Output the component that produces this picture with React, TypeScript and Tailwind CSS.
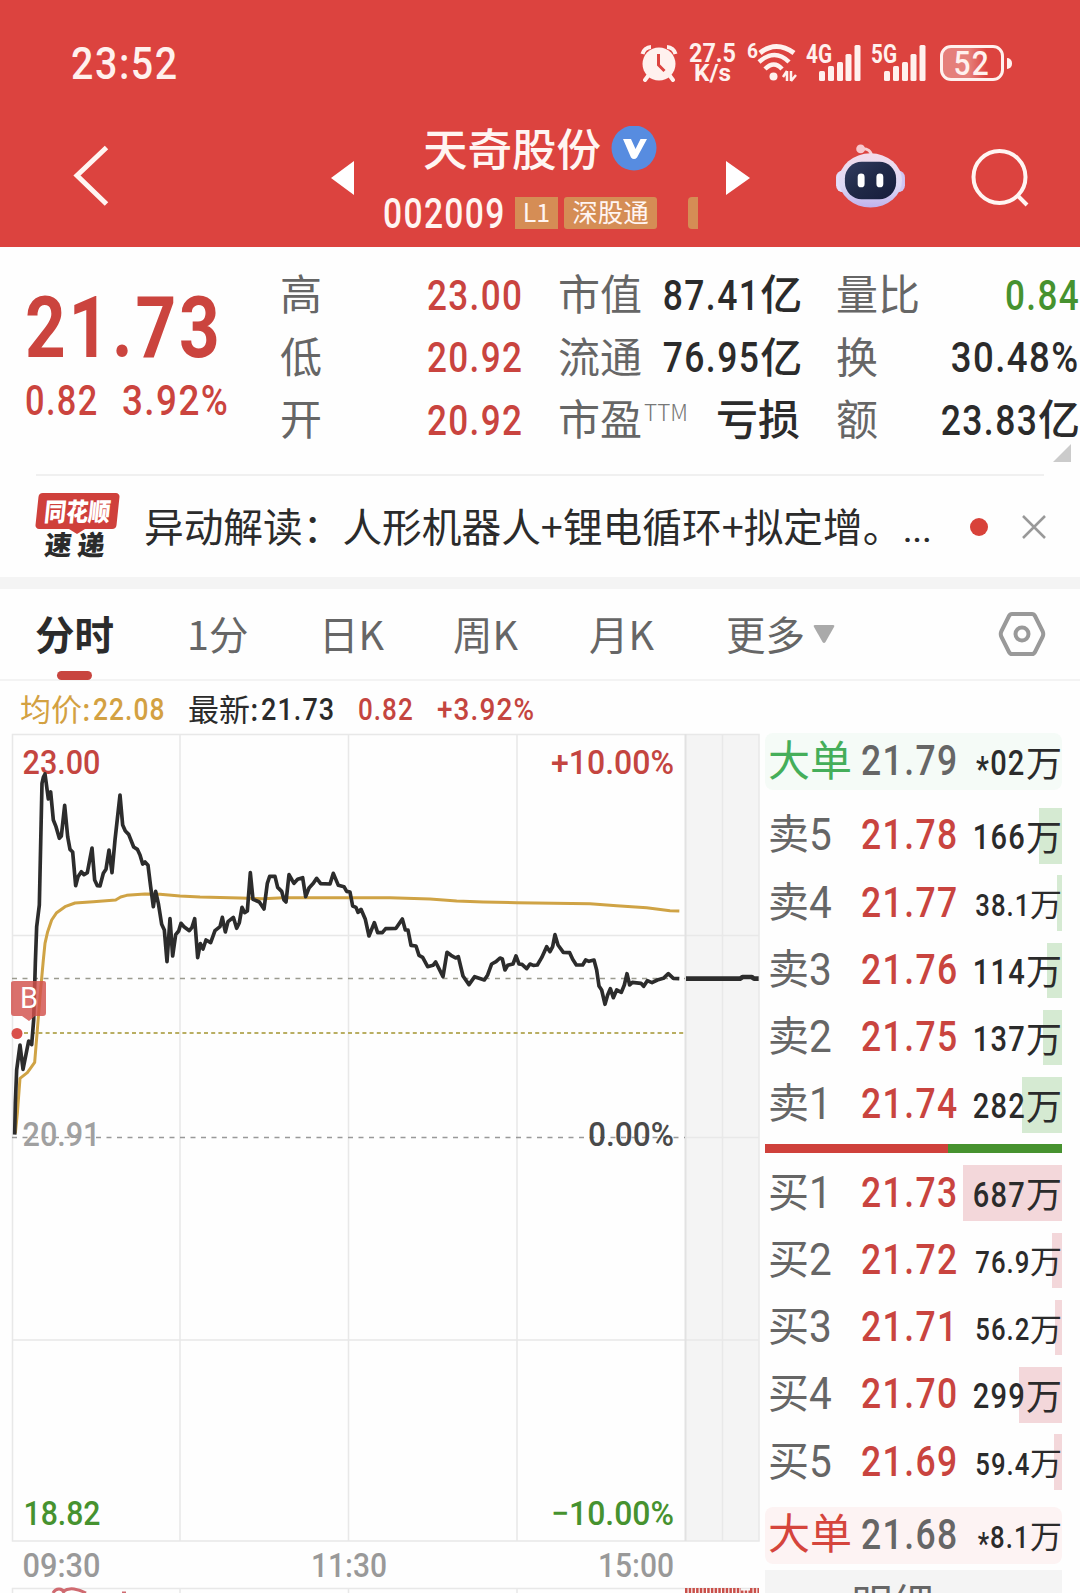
import type { ReactNode } from "react";
import clsx from "clsx";

type Level = { label: string; price: string; amount: string; bar: string; small?: boolean };

const asks: Level[] = [
  { label: "卖5", price: "21.78", amount: "166", bar: "w-[23px]" },
  { label: "卖4", price: "21.77", amount: "38.1", bar: "w-[5px]", small: true },
  { label: "卖3", price: "21.76", amount: "114", bar: "w-[15px]" },
  { label: "卖2", price: "21.75", amount: "137", bar: "w-[19px]" },
  { label: "卖1", price: "21.74", amount: "282", bar: "w-[40px]" },
];

const bids: Level[] = [
  { label: "买1", price: "21.73", amount: "687", bar: "w-[99px]" },
  { label: "买2", price: "21.72", amount: "76.9", bar: "w-[10px]", small: true },
  { label: "买3", price: "21.71", amount: "56.2", bar: "w-[7px]", small: true },
  { label: "买4", price: "21.70", amount: "299", bar: "w-[43px]" },
  { label: "买5", price: "21.69", amount: "59.4", bar: "w-[8px]", small: true },
];

// Series points, three units per pixel
const pricePoints =
  "44,1214 46,1120 50,1020 60,945 69,1018 86,933 95,944 101,870 106,700 110,590 118,525 126,160 130,142 135,132 145,207 152,186 160,270 168,290 178,325 184,318 194,226 203,320 210,358 218,366 227,467 234,440 244,425 252,434 262,428 276,354 284,450 292,467 300,468 310,430 318,418 327,360 336,428 345,330 360,195 368,285 376,303 386,313 401,351 412,358 420,375 428,402 435,396 444,406 452,470 460,530 467,484 475,520 485,583 493,600 501,695 510,566 518,678 527,614 536,603 543,580 552,590 568,602 576,592 584,566 593,683 601,641 609,657 618,630 632,638 645,602 660,590 667,562 676,606 684,575 700,562 710,595 718,578 726,532 734,548 742,543 751,428 759,508 778,516 792,537 802,460 809,439 825,439 833,472 845,484 852,510 858,516 867,434 876,450 882,460 893,448 908,443 917,500 927,474 940,460 950,445 962,461 990,462 1000,430 1015,466 1032,470 1040,484 1050,486 1058,528 1068,532 1074,547 1083,538 1096,568 1107,618 1123,578 1133,608 1147,608 1157,596 1188,595 1207,567 1216,600 1224,600 1233,646 1248,648 1257,676 1268,682 1283,710 1299,706 1307,696 1329,740 1341,667 1353,676 1367,684 1375,680 1389,738 1407,764 1424,740 1453,750 1463,735 1475,702 1488,695 1500,684 1507,687 1515,720 1523,706 1539,702 1548,678 1557,702 1566,703 1580,716 1590,702 1600,706 1612,705 1625,683 1640,650 1650,665 1658,650 1665,614 1674,645 1690,667 1709,668 1718,688 1729,705 1748,705 1757,690 1767,694 1782,690 1790,720 1797,768 1805,780 1815,823 1823,795 1831,776 1840,803 1850,780 1864,787 1873,765 1881,731 1889,765 1897,757 1923,760 1931,769 1942,752 1956,758 1972,750 1990,745 2005,731 2020,745 2038,746";

const averagePoints =
  "46,1210 52,1150 60,1045 82,1028 95,1010 104,997 112,900 120,800 130,690 135,640 143,605 155,570 170,548 195,530 225,519 280,515 347,510 362,501 380,496 435,492 480,493 540,498 600,501 720,504 790,506 850,503 1170,503 1290,507 1370,513 1450,516 1550,518 1770,521 1850,527 1940,533 2010,542 2038,543";

function Num({ children, className, scale = "scale-x-[0.815]" }: { children: ReactNode; className?: string; scale?: string }) {
  return (
    <span
      className={clsx(
        "inline-block whitespace-nowrap font-['Roboto','Liberation_Sans',sans-serif] leading-none tracking-[0.04em]",
        scale,
        className,
      )}
    >
      {children}
    </span>
  );
}

function Signal({ name }: { name: string }) {
  return (
    <svg width="56" height="40" viewBox="0 0 56 40" fill="#fff1ee" className="overflow-visible">
      <text x="0" y="19.5" textLength="26" lengthAdjust="spacingAndGlyphs" className="font-['Roboto',sans-serif] text-[25px] font-bold">
        {name}
      </text>
      <rect x="13" y="28" width="6" height="10" rx="1.5" />
      <rect x="22" y="23" width="6" height="15" rx="1.5" />
      <rect x="31" y="19" width="6" height="19" rx="1.5" />
      <rect x="39.5" y="11" width="6" height="27" rx="1.5" />
      <rect x="48.5" y="2" width="6" height="36" rx="1.5" />
    </svg>
  );
}

function StatusBar() {
  return (
    <div className="flex h-[126px] items-center pl-[71px] text-[#fff1ee]">
      <Num className="origin-left pt-0.5 text-[44px] font-medium" scale="scale-x-[0.895]">23:52</Num>
      <div className="ml-auto flex h-10 items-center pr-[68px]">
        <svg width="38" height="38" viewBox="0 0 38 38" className="mr-[11px]">
          <circle cx="19" cy="20" r="16.5" fill="#fff1ee" />
          <path d="M2.5 10A9 9 0 0 1 11 3M27 3a9 9 0 0 1 8.5 7" fill="none" stroke="#fff1ee" strokeWidth="4" />
          <path d="M8 32l-3 4M30 32l3 4" stroke="#fff1ee" strokeWidth="4" strokeLinecap="round" />
          <path d="M18.5 10v11l6 6" fill="none" stroke="#dc433f" strokeWidth="3" />
        </svg>
        <svg width="48" height="40" viewBox="0 0 48 40" className="mr-2.5 overflow-visible font-['Roboto',sans-serif] font-bold" fill="#fff1ee">
          <text x="0" y="19" fontSize="25" textLength="47" lengthAdjust="spacingAndGlyphs">27.5</text>
          <text x="5" y="38" fontSize="24" textLength="37" lengthAdjust="spacingAndGlyphs">K/s</text>
        </svg>
        <svg width="50" height="40" viewBox="0 0 50 40" className="mr-[9px] overflow-visible" fill="none" stroke="#fff1ee">
          <text x="0" y="15" fontSize="20" fill="#fff1ee" stroke="none" className="font-['Roboto',sans-serif] font-bold" textLength="11" lengthAdjust="spacingAndGlyphs">6</text>
          <path d="M13 10q16-13 34 0" strokeWidth="5" />
          <path d="M12 19q16-14 30 0" strokeWidth="4.5" />
          <path d="M18 26q9-9 17 0" strokeWidth="4.5" />
          <circle cx="26.5" cy="33.5" r="4" fill="#fff1ee" stroke="none" />
          <path d="M40 28v10M36 34l4-6M44 28v10M44 38l5-6" strokeWidth="2.5" />
        </svg>
        <Signal name="4G" />
        <div className="w-[9px]" />
        <Signal name="5G" />
        <div className="ml-[13px] flex h-9 w-16 items-center justify-center rounded-[11px] border-[3px] border-[#fff1ee] bg-[linear-gradient(90deg,#e57f7a_45%,#dc433f_75%)]">
          <Num className="text-[34px] font-medium" scale="scale-x-[0.88]">52</Num>
        </div>
        <div className="ml-[3px] h-[11px] w-[5px] rounded-r-md bg-[#fff1ee]" />
      </div>
    </div>
  );
}

function Robot() {
  return (
    <svg width="69" height="65" viewBox="0 0 70 66">
      <defs>
        <linearGradient id="shell" x1="0" y1="0" x2="0" y2="1">
          <stop offset="0" stopColor="#f3dcea" />
          <stop offset="0.6" stopColor="#ded9f5" />
          <stop offset="1" stopColor="#bfb2ec" />
        </linearGradient>
        <linearGradient id="visor" x1="0" y1="0" x2="1" y2="1">
          <stop offset="0" stopColor="#323c60" />
          <stop offset="0.5" stopColor="#202947" />
          <stop offset="1" stopColor="#161d3c" />
        </linearGradient>
      </defs>
      <path d="M25 5q11-1 11 8" fill="none" stroke="#f7cfd3" strokeWidth="3" />
      <circle cx="25" cy="5" r="4.5" fill="#f7c8ce" />
      <rect x="0" y="27" width="14" height="22" rx="7" fill="#e3defa" />
      <rect x="56" y="27" width="14" height="22" rx="7" fill="#cfc6f3" />
      <ellipse cx="35" cy="37" rx="32" ry="27.5" fill="url(#shell)" />
      <rect x="9" y="18" width="52" height="38" rx="17" fill="url(#visor)" />
      <rect x="22" y="30" width="7" height="14" rx="3.5" fill="#fff" />
      <rect x="41" y="30" width="7" height="14" rx="3.5" fill="#fff" />
    </svg>
  );
}

function TitleBar() {
  return (
    <div className="flex h-[121px] items-start pl-[73px] text-[#fff5f2]">
      <svg width="36" height="62" viewBox="0 0 36 62" className="mt-[19px]" fill="none" stroke="#fff5f2" strokeWidth="5">
        <path d="M33.5 2.5L4 30.5l29.5 28.5" />
      </svg>
      <svg width="24" height="34" viewBox="0 0 24 34" className="ml-[222px] mt-[35px]" fill="#fff">
        <path d="M23 0v34L0 17z" />
      </svg>
      <div className="ml-[28px] flex w-[343px] flex-col">
        <div className="flex h-[46px] items-center pl-[40px]">
          <span className="pb-1 text-[44.5px] font-medium leading-none">天奇股份</span>
          <svg width="46" height="46" viewBox="0 0 46 46" className="ml-2.5 shrink-0">
            <circle cx="23" cy="22" r="22.5" fill="#578ce0" />
            <path d="M12 13h8l4.5 10 5-10h6.5L26 31.5q-3 3-6 0z" fill="#fff" />
          </svg>
        </div>
        <div className="mt-[25px] flex h-8 items-center">
          <div className="w-[132px] shrink-0 pt-px">
            <Num className="origin-left text-[42px] font-medium" scale="scale-x-[0.8]">002009</Num>
          </div>
          <div className="flex h-8 w-[43px] shrink-0 items-center justify-center bg-[#d58d55] pb-1 text-[25px] leading-none">L1</div>
          <div className="ml-1.5 flex h-8 w-[93px] shrink-0 items-center justify-center rounded-[3px] bg-[#d58d55] pb-1 text-[25.5px] leading-none">
            深股通
          </div>
          <div className="ml-[31px] h-8 w-2.5 shrink-0 rounded-l-[4px] bg-[#d58d55]" />
        </div>
      </div>
      <svg width="24" height="34" viewBox="0 0 24 34" className="mt-[35px]" fill="#fff">
        <path d="M0 0v34L24 17z" />
      </svg>
      <div className="ml-[86px] mt-[18px]">
        <Robot />
      </div>
      <svg width="60" height="60" viewBox="0 0 60 60" className="ml-[66px] mt-[21px]" fill="none" stroke="#fff5f2" strokeWidth="4">
        <circle cx="28.5" cy="30" r="26" />
        <path d="M46 48l10 10" />
      </svg>
    </div>
  );
}

type StatProps = { label: string; value?: string; unit?: string; sup?: string; tone?: string; scale?: string };

function Stat({ label, value, unit, sup, scale, tone = "text-[#2b2b2b]" }: StatProps) {
  return (
    <div className="flex h-[62.5px] items-center whitespace-nowrap">
      <span className="pb-1 text-[42px] leading-none text-[#666]">{label}</span>
      {sup && <span className="mb-4 ml-0.5 text-[22.5px] font-light leading-none text-[#777]">{sup}</span>}
      <span className={clsx("ml-auto flex items-center", tone)}>
        {value && <Num className="origin-right pt-0.5 text-[43px] font-medium" scale={scale}>{value}</Num>}
        {unit && <span className="pb-1 text-[42px] font-medium leading-none">{unit}</span>}
      </span>
    </div>
  );
}

function Quote() {
  return (
    <section className="flex h-[227px] pt-[16px]">
      <div className="w-[280px] shrink-0 pl-[25px] text-[#cb443e]">
        <div className="mt-[22px] h-[86px]">
          <Num className="origin-left text-[86px] font-bold" scale="scale-x-[0.825]">21.73</Num>
        </div>
        <div className="mt-[8px] flex h-[43px] items-center">
          <div className="w-[97px]">
            <Num className="origin-left text-[43px] font-medium" scale="scale-x-[0.8]">0.82</Num>
          </div>
          <Num className="origin-left text-[43px] font-medium" scale="scale-x-[0.855]">3.92%</Num>
        </div>
      </div>
      <div className="w-[243px] shrink-0">
        <Stat label="高" value="23.00" tone="text-[#c9443f]" />
        <Stat label="低" value="20.92" tone="text-[#c9443f]" />
        <Stat label="开" value="20.92" tone="text-[#c9443f]" />
      </div>
      <div className="ml-[35px] w-[242px] shrink-0">
        <Stat label="市值" value="87.41" unit="亿" scale="scale-x-[0.825]" />
        <Stat label="流通" value="76.95" unit="亿" scale="scale-x-[0.825]" />
        <Stat label="市盈" sup="TTM" unit="亏损" />
      </div>
      <div className="ml-[36px] w-[244px] shrink-0">
        <Stat label="量比" value="0.84" tone="text-[#46922f]" />
        <Stat label="换" value="30.48%" scale="scale-x-[0.85]" />
        <Stat label="额" value="23.83" unit="亿" scale="scale-x-[0.825]" />
        <svg width="18" height="18" viewBox="0 0 18 18" className="ml-[217px] mt-[-7px]">
          <path d="M18 0v18H0z" fill="#cbcbcb" />
        </svg>
      </div>
    </section>
  );
}

function NewsBar() {
  return (
    <section className="mx-[36px] flex h-[103px] items-center border-t-2 border-[#f0f0f0]">
      <div className="flex w-[82px] shrink-0 flex-col items-center pb-1">
        <div className="flex h-[36px] w-[81px] -skew-x-6 items-center justify-center rounded-[4px] bg-[#cf403b] text-[22px] font-black leading-none text-white">
          <span className="scale-y-115 pb-0.5">同花顺</span>
        </div>
        <svg width="16" height="5" viewBox="0 0 16 5">
          <path d="M0 0h16L8 5z" fill="#cf403b" />
        </svg>
        <div className="-mt-1 flex -skew-x-6 gap-1.5 pr-1 text-[27px] font-black leading-none text-[#2b2b2b]">
          <span>速</span>
          <span>递</span>
        </div>
      </div>
      <span className="ml-[26px] w-[790px] shrink-0 whitespace-nowrap text-[39.7px] leading-none text-[#2b2b2b]">
        异动解读：人形机器人+锂电循环+拟定增。
        <span className="font-['Roboto',sans-serif] tracking-[-0.02em]">...</span>
      </span>
      <div className="ml-[36px] size-[18px] shrink-0 rounded-full bg-[#d8423a]" />
      <svg width="24" height="24" viewBox="0 0 24 24" className="ml-[34px] shrink-0" stroke="#999" strokeWidth="2.5">
        <path d="M1 1l22 22M23 1L1 23" />
      </svg>
    </section>
  );
}

function Tabs() {
  return (
    <nav className="flex h-[92px] items-center border-b-2 border-[#f3f3f3] text-[39.5px] leading-none text-[#666]">
      <div className="relative ml-[35px] w-[152px] pb-0.5 font-bold text-[#2b2b2b]">
        分时
        <div className="absolute left-[22px] top-[58px] h-[9px] w-[35px] rounded-full bg-[#c8453f]" />
      </div>
      <div className="w-[132px] pb-0.5">1分</div>
      <div className="w-[134px] pb-0.5">日K</div>
      <div className="w-[136px] pb-0.5">周K</div>
      <div className="w-[137px] pb-0.5">月K</div>
      <div className="w-[87px] pb-0.5">更多</div>
      <svg width="22" height="20" viewBox="0 0 22 20">
        <path d="M2 1h18q2 0 1 2L12.5 18q-1.5 2-3 0L1 3Q0 1 2 1z" fill="#aaa" />
      </svg>
      <svg width="48" height="46" viewBox="0 0 48 46" className="ml-[163px]" fill="none" stroke="#999" strokeWidth="4">
        <path d="M14 3h20q2 0 3 2l7.5 15q1.5 3 0 6l-7.5 15q-1 2-3 2H14q-2 0-3-2L3.5 26q-1.5-3 0-6l7.5-15q1-2 3-2z" />
        <circle cx="24" cy="23" r="6.5" />
      </svg>
    </nav>
  );
}

function Summary() {
  return (
    <div className="flex h-[51px] items-center pl-[20px] pt-1.5 text-[31px] leading-none">
      <div className="flex w-[168px] items-center whitespace-nowrap text-[#d3a142]">
        <span className="pb-1 pr-0.5">均价:</span>
        <Num className="origin-left text-[31px] font-medium" scale="scale-x-[0.85]">22.08</Num>
      </div>
      <div className="flex w-[170px] items-center whitespace-nowrap text-[#2b2b2b]">
        <span className="pb-1 pr-0.5">最新:</span>
        <Num className="origin-left text-[31px] font-medium" scale="scale-x-[0.87]">21.73</Num>
      </div>
      <div className="flex w-[79px] items-center text-[#c44540]">
        <Num className="origin-left text-[31px] font-medium" scale="scale-x-[0.84]">0.82</Num>
      </div>
      <Num className="origin-left text-[31px] font-medium text-[#c44540]" scale="scale-x-[0.9]">+3.92%</Num>
    </div>
  );
}

function Label({ x, y, w, fill, children }: { x: number; y: number; w: number; fill: string; children: string }) {
  return (
    <text x={x} y={y} fill={fill} textLength={w} lengthAdjust="spacingAndGlyphs" className="font-['Roboto',sans-serif] text-[34px] font-medium">
      {children}
    </text>
  );
}

function Chart() {
  return (
    <svg width="762" height="861" viewBox="0 732 762 861" className="shrink-0">
      <rect x="685" y="734" width="74" height="807" fill="#f4f4f4" />
      <g stroke="#e8e8e8" strokeWidth="1.5" fill="none">
        <path d="M12.5 734.5H759V1541H12.5zM12.5 935.5H759M12.5 1340H759" />
        <path d="M180 734V1541M348.5 734V1541M517 734V1541M722.5 734V1541" />
        <path d="M685 1137.5H759M12.5 1593V1588.5H759M180 1588V1593M348.5 1588V1593M517 1588V1593" />
      </g>
      <path d="M685.5 734V1541" stroke="#e2e2e2" strokeWidth="2" />
      <g fill="none" strokeWidth="1.5">
        <path d="M12 978.5H685" stroke="#9b9b8f" strokeDasharray="5 5.5" />
        <path d="M24 1033H685" stroke="#b9ae62" strokeWidth="2" strokeDasharray="4 3.2" />
        <path d="M12 1137.5H685" stroke="#999" strokeDasharray="5 5.5" />
      </g>

      <Label x={22.5} y={774} w={78} fill="#c44540">23.00</Label>
      <Label x={551} y={774} w={123} fill="#c44540">+10.00%</Label>
      <Label x={22.5} y={1145.5} w={78} fill="#a0a0a0">20.91</Label>
      <Label x={588} y={1145.5} w={86} fill="#4a4a4a">0.00%</Label>
      <Label x={23.5} y={1525} w={77} fill="#46922f">18.82</Label>
      <Label x={551} y={1525} w={123} fill="#46922f">−10.00%</Label>
      <Label x={22.5} y={1577} w={78} fill="#999">09:30</Label>
      <Label x={311} y={1577} w={76} fill="#999">11:30</Label>
      <Label x={598} y={1577} w={76} fill="#999">15:00</Label>

      <g transform="translate(0 730) scale(0.33333)" fill="none" strokeLinejoin="round">
        <polyline points={averagePoints} stroke="#cfa345" strokeWidth="9" />
        <polyline points={pricePoints} stroke="#2c2c2c" strokeWidth="11" />
        <polyline points="2058,746 2220,746 2228,741 2255,741 2262,746 2276,746" stroke="#2c2c2c" strokeWidth="14" />
      </g>

      <path d="M14 981h30q2 0 2 2v30q0 3-3 3h-8l-6 5-7-5h-8q-3 0-3-3v-30q0-2 3-2z" fill="#d2504c" fillOpacity="0.82" />
      <text x="20" y="1008" fill="#fff" textLength="18" lengthAdjust="spacingAndGlyphs" className="font-['Roboto',sans-serif] text-[30px]">B</text>
      <circle cx="17" cy="1033.5" r="5.5" fill="#d9504a" />

      <path d="M53 1593q2-4 6-4t5 4M62 1592q6-4 12-3t12 4" fill="none" stroke="#cf6a70" strokeWidth="3" />
      <path d="M122 1593h4" stroke="#cf6a70" strokeWidth="3" />
      <path d="M685 1590.5H741M750 1590.5H759" stroke="#c9504a" strokeWidth="5" strokeDasharray="2.5 1.2" />
      <path d="M741 1592H750" stroke="#c9504a" strokeWidth="3" strokeDasharray="2.5 1.2" />
    </svg>
  );
}

function Amount({ value, small, starred }: { value: string; small?: boolean; starred?: boolean }) {
  return (
    <div className="relative ml-auto flex shrink-0 items-center text-[#2b2b2b]">
      <Num className={clsx("origin-right pt-1 font-medium", small ? "text-[31px]" : "text-[35px]")} scale="scale-x-[0.83]">
        {starred && <span className="relative top-1.5">*</span>}
        {value}
      </Num>
      <span className={clsx("pb-0.5 leading-none", small ? "text-[32px]" : "text-[36px]")}>万</span>
    </div>
  );
}

function BookRow({ level, side }: { level: Level; side: "ask" | "bid" }) {
  return (
    <div className="relative mb-[11.75px] flex h-[55.5px] items-center pl-[3px]">
      <div className={clsx("absolute right-0 top-0 h-full", side === "ask" ? "bg-[#d5ead2]" : "bg-[#f3d7da]", level.bar)} />
      <div className="flex w-[93px] shrink-0 items-center text-[41px] leading-none text-[#666]">
        <span className="pb-2">{level.label[0]}</span>
        <Num className="origin-left pb-0.5 text-[45px]" scale="scale-x-[0.9]">{level.label[1]}</Num>
      </div>
      <div className="w-[100px] shrink-0 pb-0.5">
        <Num className="origin-left text-[43px] font-medium text-[#c9443f]" scale="scale-x-[0.825]">{level.price}</Num>
      </div>
      <Amount value={level.amount} small={level.small} />
    </div>
  );
}

function BigOrder({ price, amount, side, small }: { price: string; amount: string; side: "ask" | "bid"; small?: boolean }) {
  return (
    <div className={clsx("flex h-[57px] items-center rounded-lg pl-[3px]", side === "ask" ? "bg-[#f5fbf7]" : "bg-[#fdf3f3]")}>
      <span className={clsx("w-[93px] shrink-0 whitespace-nowrap pb-2 text-[42px] leading-none", side === "ask" ? "text-[#45ae5a]" : "text-[#d5453c]")}>
        大单
      </span>
      <div className="w-[100px] shrink-0 pb-0.5">
        <Num className="origin-left text-[43px] font-medium text-[#666]" scale="scale-x-[0.825]">{price}</Num>
      </div>
      <Amount value={amount} small={small} starred />
    </div>
  );
}

function OrderBook() {
  return (
    <aside className="ml-[3px] mt-px w-[297px] shrink-0">
      <BigOrder price="21.79" amount="02" side="ask" />
      <div className="mt-[18px]">
        {asks.map((level) => (
          <BookRow key={level.label} level={level} side="ask" />
        ))}
      </div>
      <div className="mb-[12px] mt-[1px] flex h-[9px]">
        <div className="w-[183px] bg-[#cf413b]" />
        <div className="flex-1 bg-[#46922f]" />
      </div>
      {bids.map((level) => (
        <BookRow key={level.label} level={level} side="bid" />
      ))}
      <div className="mt-[17px]">
        <BigOrder price="21.68" amount="8.1" side="bid" small />
      </div>
      <div className="mt-[6px] flex h-[60px] justify-center bg-[#f4f4f4] pr-[42px] pt-[11px] text-[41px] leading-none text-[#666]">明细</div>
    </aside>
  );
}

export default function App() {
  return (
    <main className="h-[1593px] w-[1080px] overflow-hidden bg-[#fefefe] font-['Noto_Sans_CJK_SC',sans-serif]">
      <header className="h-[247px] bg-[#dc433f]">
        <StatusBar />
        <TitleBar />
      </header>
      <Quote />
      <NewsBar />
      <div className="h-3 bg-[#f4f4f4]" />
      <Tabs />
      <Summary />
      <div className="flex h-[861px] overflow-hidden">
        <Chart />
        <OrderBook />
      </div>
    </main>
  );
}
